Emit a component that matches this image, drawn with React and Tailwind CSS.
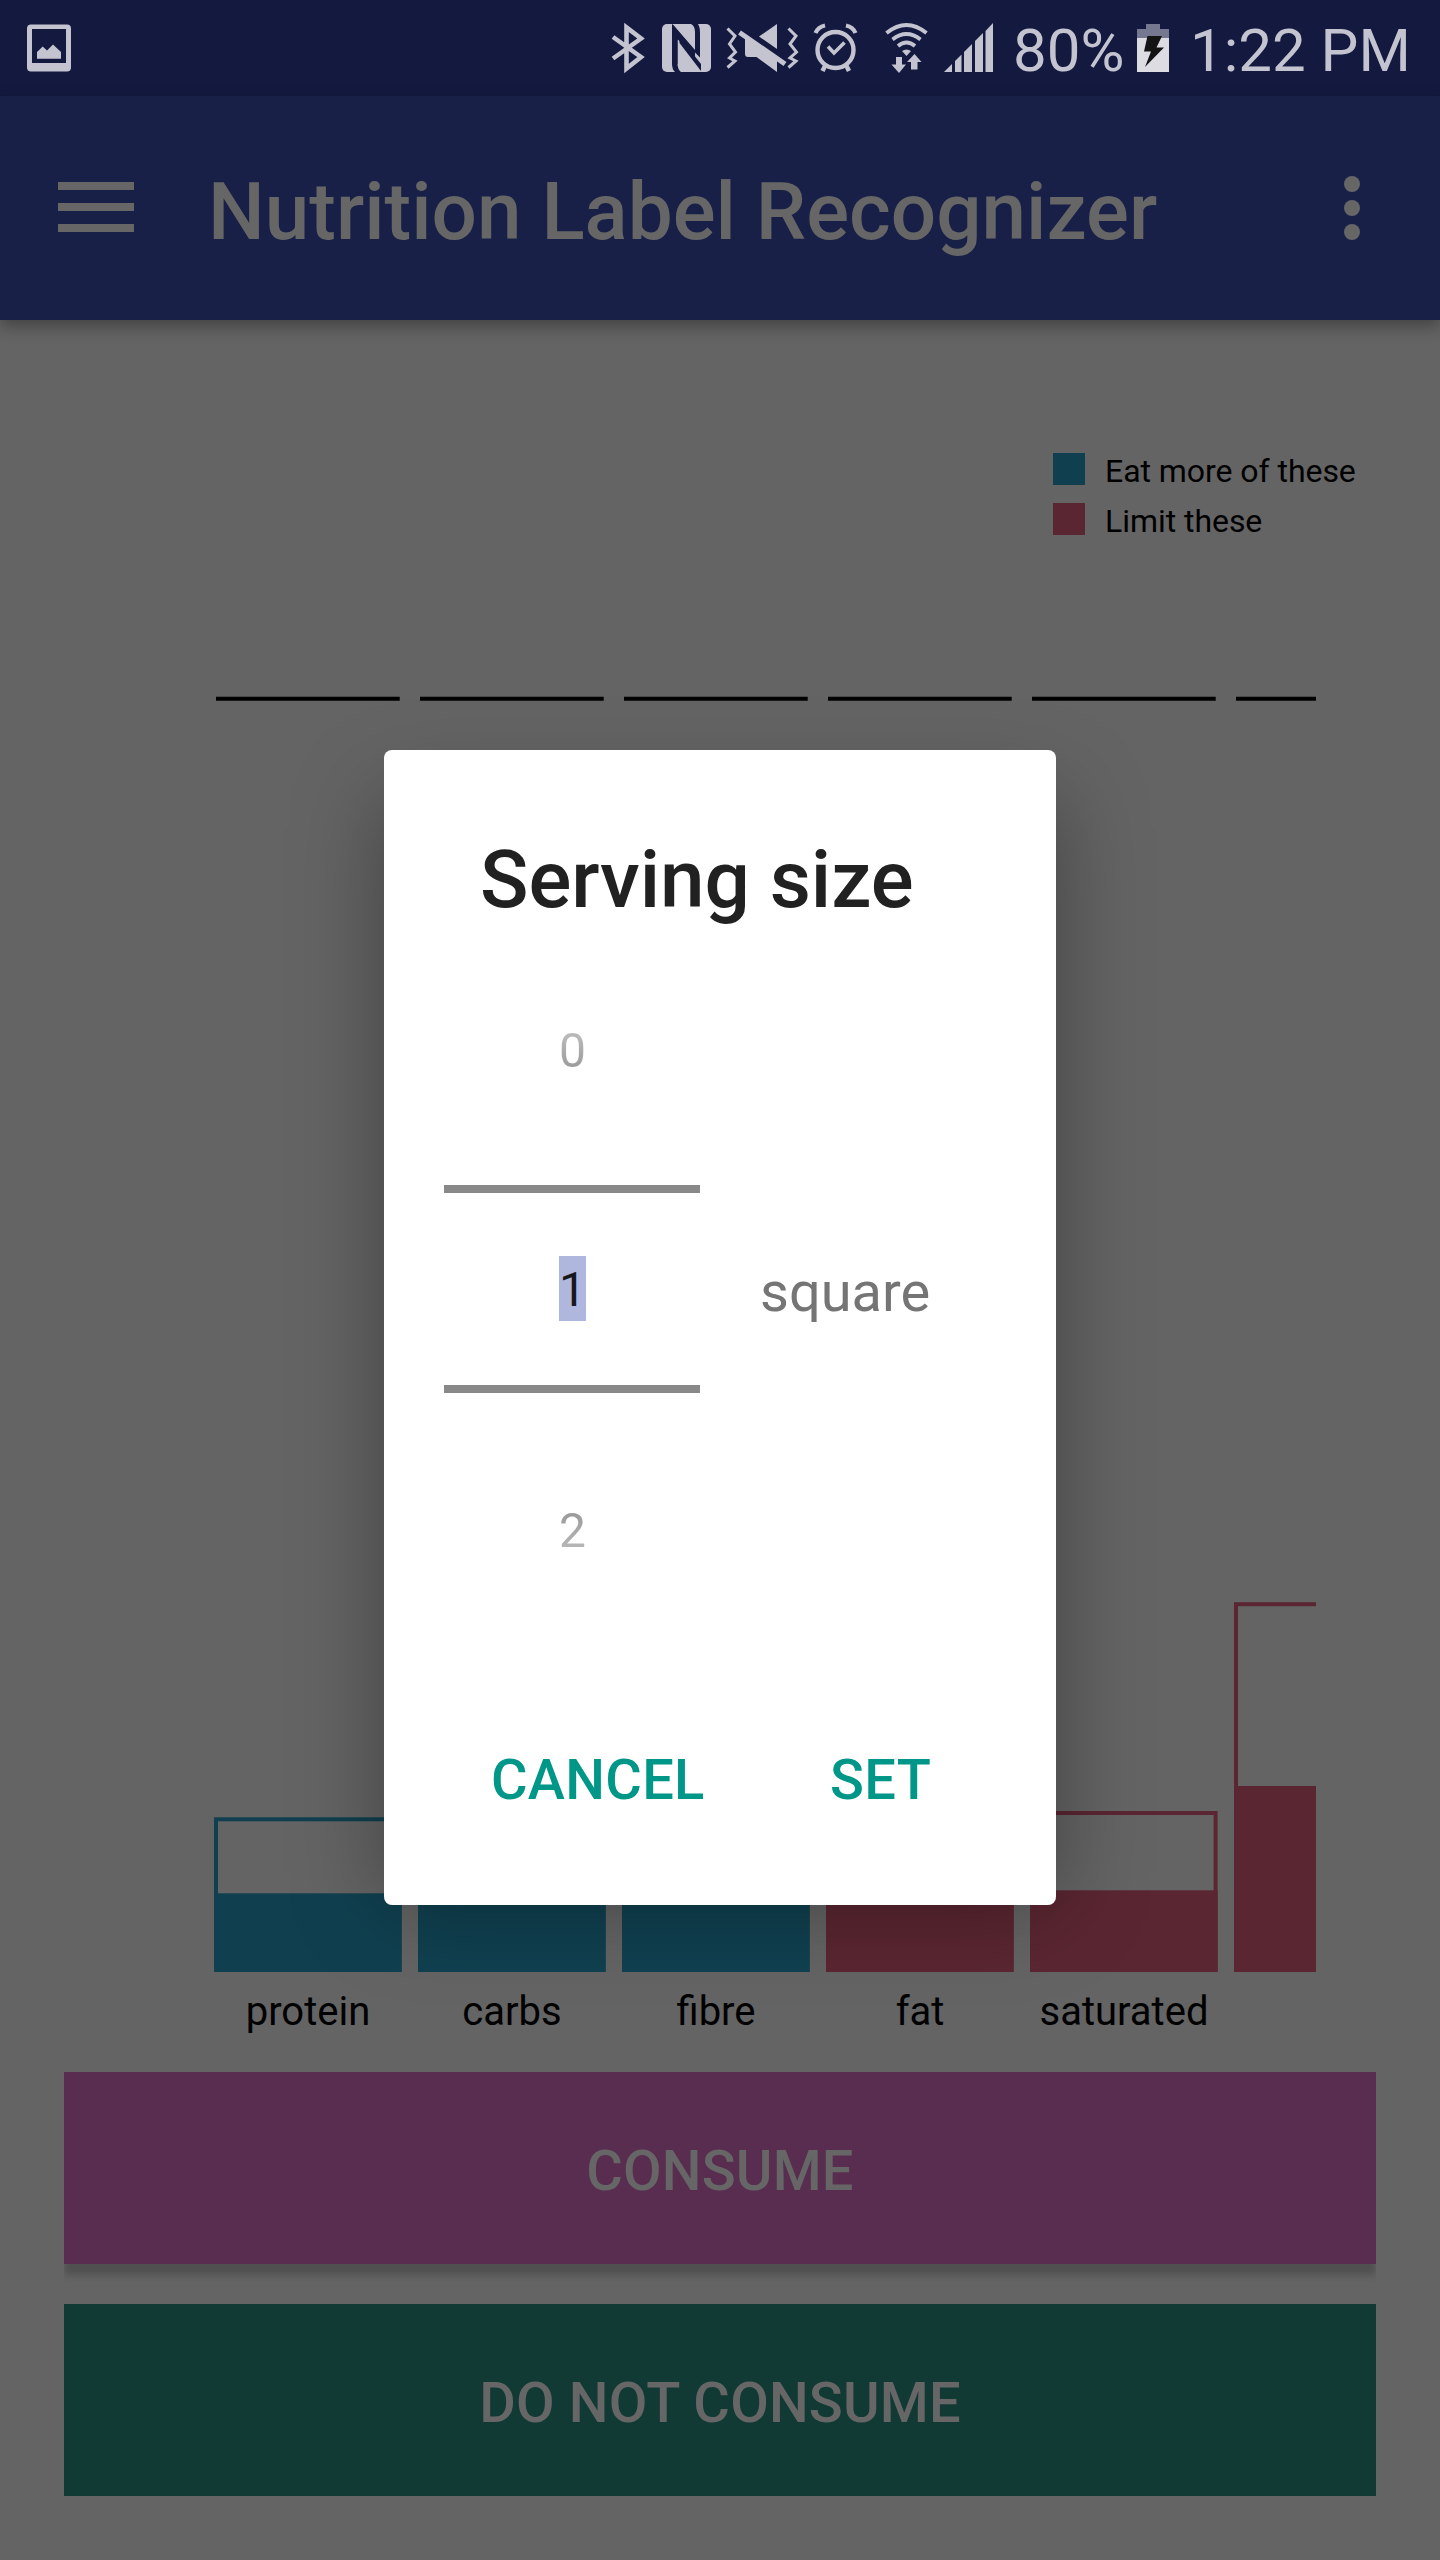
const INK = "#c4c4d0";
const BLUE = "#104050";
const RED = "#5a2631";

function StatusIcons() {
  return (
    <svg className="h-24 w-[400px] shrink-0" viewBox="600 0 400 96" fill={INK}>
      {/* bluetooth */}
      <path
        d="M613 37 L641 57 L626.5 68.5 V27.5 L641 38.5 L613 58.5"
        fill="none"
        stroke={INK}
        strokeWidth="4.6"
      />
      {/* nfc */}
      <rect x="662" y="24" width="49" height="48" rx="5" />
      <g fill="#141940">
        <path d="M672 24 L695 51 V32 Q695 26 691 24 H698 Q700 27 700 33 V57.5 L680 37.5 L677.5 40 V64 Q677.5 69 681 72 H675 Q672 69 672 64 Z" />
        <path d="M677.5 39 L695 58 V50 L672.5 24 V64 H677.5 Z" />
        <path d="M679.5 43 L701 71 V64 L679.5 37 Z" />
      </g>
      {/* muted and vibrating */}
      <g fill="none" stroke={INK} strokeWidth="3">
        <path d="M727.5 28.5 L735 36 L729.5 44 L735.5 52 L729.5 58 L735 61 L727.5 67.5" />
        <path d="M788.5 28.5 L796 36 L790 44 L796.5 52 L790 58 L796 61 L788.5 67.5" />
      </g>
      <path d="M777 24 V49 L759 36.5 Z" />
      <path d="M745 38 L777 60 V72 L756.5 57 H748 Q745 57 745 54 Z" />
      <path d="M739.5 32.5 L785 64" stroke={INK} strokeWidth="5" />
      {/* alarm */}
      <g fill="none" stroke={INK}>
        <circle cx="835.5" cy="50" r="18" strokeWidth="4.4" />
        <path d="M828 46.5 L834 53 L844.5 42.5" strokeWidth="3.6" />
        <path d="M815.5 33 Q818 27 825 25.5 M855.500 33 Q853 27 846 25.5" strokeWidth="4.2" />
        <path d="M825.500 65 L822.500 71 M846 65 L849 71" strokeWidth="4.5" />
      </g>
      {/* wifi with traffic arrows */}
      <g fill="none" stroke={INK} strokeWidth="3.8">
        <path d="M886.500 33 Q906.500 17 926.500 33" />
        <path d="M892.500 39.500 Q906.500 28.500 920.500 39.500" />
        <path d="M898 46 Q906.500 39 915 46" />
      </g>
      <path d="M902 51 Q906.500 48 911 51 L906.500 56 Z" />
      <path d="M896 57 H902 V64.500 H906 L899 73 L891.500 64.500 H896 Z" />
      <path d="M911 69.500 H917.500 V62 H921.500 L914.500 54 L907 62 H911 Z" />
      {/* signal strength */}
      <path d="M944 72 L952 64 V72 Z M955 61 L961.500 54.500 V72 H955 Z M964 52 L972 44 V72 H964 Z M975 41 L983 33 V72 H975 Z M985.500 31 L993 23 V72 H985.500 Z" />
    </svg>
  );
}

function StatusBar() {
  return (
    <div className="flex h-24 items-center bg-[#141940] pl-6 text-[60px] leading-[60px] text-[#c4c4d0]">
      <svg className="h-24 w-[50px]" viewBox="24 0 50 96">
        <path
          fillRule="evenodd"
          fill={INK}
          d="M31 24.500 H67 Q71 24.500 71 28.500 V67.500 Q71 71.500 67 71.500 H31 Q27 71.500 27 67.500 V28.500 Q27 24.500 31 24.500 Z M32 29 V63 H66 V29 Z"
        />
        <path fill={INK} d="M37 58.700 V52 L42.700 46.500 L47 50.500 L53 44.500 L61 52 V58.700 Z" />
      </svg>
      <div className="w-[526px]" />
      <StatusIcons />
      <span className="w-[137px] pt-1.5 pl-[13px]">80%</span>
      <svg className="h-24 w-8 shrink-0" viewBox="1137 0 32 96">
        <path fill="#75788e" d="M1146 24 H1160 V29 H1169 V38 H1137 V29 H1146 Z" />
        <path fill="#dcdce2" d="M1137 38 H1169 V72 H1137 Z" />
        <path fill="#141414" d="M1147.500 36 H1162 L1156.500 47.500 H1164 L1145 67 L1151 51.500 H1144 Z" />
      </svg>
      <span className="pt-1.5 pl-[21px] whitespace-nowrap">1:22 PM</span>
    </div>
  );
}

function AppBar() {
  return (
    <div className="relative flex h-56 items-center bg-[#192047] pl-[58px] shadow-[0_6px_16px_rgba(0,0,0,0.35)]">
      <div className="flex w-[76px] flex-col gap-[13px] pb-0.5">
        <div className="h-2 bg-[#666]" />
        <div className="h-2 bg-[#666]" />
        <div className="h-2 bg-[#666]" />
      </div>
      <h1 className="w-[1210px] pt-[7px] pl-[74px] text-[80px] leading-[80px] font-medium whitespace-nowrap text-[#666]">
        Nutrition Label Recognizer
      </h1>
      <div className="flex w-4 flex-col gap-2">
        <div className="size-4 rounded-full bg-[#666]" />
        <div className="size-4 rounded-full bg-[#666]" />
        <div className="size-4 rounded-full bg-[#666]" />
      </div>
    </div>
  );
}

function Legend() {
  return (
    <div className="flex flex-col gap-[18px] pt-[133px] pl-[1053px] text-[32px] leading-8 tracking-[-0.05px] text-black">
      <div className="flex h-8 items-center gap-5">
        <div className="size-8 bg-[#104050]" />
        <span className="pt-[3px] whitespace-nowrap">Eat more of these</span>
      </div>
      <div className="flex h-8 items-center gap-5">
        <div className="size-8 bg-[#5a2631]" />
        <span className="pt-[3px] whitespace-nowrap">Limit these</span>
      </div>
    </div>
  );
}

const BARS = [
  { color: BLUE, top: 1819.3, fill: 1895.3 },
  { color: BLUE, top: 1819.3, fill: 1895.3 },
  { color: BLUE, top: 1819.3, fill: 1895.3 },
  { color: RED, top: 1813, fill: 1892.3 },
  { color: RED, top: 1813, fill: 1892.3 },
  { color: RED, top: 1604.2, fill: 1788 },
];
const LABELS = ["protein", "carbs", "fibre", "fat", "saturated"];

function Chart() {
  return (
    <div className="pt-[145px] pl-[200px]">
      <svg className="h-[1292px] w-[1116px]" viewBox="200 680 1116 1292">
        {BARS.map((bar, i) => {
          const x = 216 + i * 204;
          return (
            <g key={i}>
              <path d={`M${x} 698.700 h183.700`} stroke="#000" strokeWidth="4" />
              <rect x={x} y={bar.top} width="183.600" height="200" fill="none" stroke={bar.color} strokeWidth="4" />
              <rect x={x - 2} y={bar.fill - 2} width="187.600" height="200" fill={bar.color} />
            </g>
          );
        })}
      </svg>
      <div className="flex h-[100px] pt-[15px] pl-1.5 text-[40px] leading-[50px] text-black">
        {LABELS.map((label) => (
          <span key={label} className="w-[204px] text-center">
            {label}
          </span>
        ))}
      </div>
    </div>
  );
}

function Actions() {
  return (
    <div className="flex flex-col gap-10 px-16 text-[56px] leading-[56px] font-medium text-[#666]">
      <div className="[clip-path:inset(0_0_-24px_0)]">
        <button className="flex h-48 w-full items-center justify-center bg-[#592d50] pt-1.5 font-medium tracking-[0.2px] shadow-[0_11px_7px_rgba(0,0,0,0.2)]">
          CONSUME
        </button>
      </div>
      <button className="flex h-48 items-center justify-center bg-[#123a35] pt-1.5 font-medium tracking-[0.2px]">
        DO NOT CONSUME
      </button>
    </div>
  );
}

function ServingDialog() {
  return (
    <div className="absolute top-[750px] left-[384px] h-[1155px] w-[672px]">
      <div className="absolute inset-x-0 top-[47px] bottom-0 rounded-lg shadow-[0_0_90px_rgba(0,0,0,0.34)]" />
      <div className="relative flex h-full flex-col rounded-lg bg-white">
        <h2 className="h-[195px] pt-[90px] pl-24 text-[80px] leading-[80px] font-medium tracking-[-0.05px] text-[#212121]">
          Serving size
        </h2>
        <div className="flex h-[688px] items-start gap-[60px] pl-[60px]">
          <div className="flex w-64 flex-col items-center text-5xl leading-[65px]">
            <div className="h-60 pt-[73px] pl-px">
              <span className="block bg-linear-to-b from-[#b8b8b8] from-30% to-[#999] to-80% bg-clip-text text-transparent">0</span>
            </div>
            <div className="flex h-[208px] w-full items-start justify-center border-y-8 border-[#888] pt-[63px] pl-px">
              <span className="h-[65px] bg-[#b0b7df] pt-0.5 leading-[64px] text-[#17181c]">1</span>
            </div>
            <div className="pt-[105px] pl-px">
              <span className="block bg-linear-to-b from-[#999] from-20% to-[#b8b8b8] to-80% bg-clip-text text-transparent">2</span>
            </div>
          </div>
          <span className="pt-[314px] text-[56px] leading-[66px] text-[#757575]">square</span>
        </div>
        <div className="flex pt-[119px] pl-[107px] text-[56px] leading-[56px] font-medium tracking-[0.3px] text-[#009688]">
          <span className="w-[339px]">CANCEL</span>
          <span>SET</span>
        </div>
      </div>
    </div>
  );
}

export default function App() {
  return (
    <div className="relative h-[2560px] w-[1440px] overflow-hidden bg-[#646464] font-[Roboto,sans-serif]">
      <StatusBar />
      <AppBar />
      <Legend />
      <Chart />
      <Actions />
      <ServingDialog />
    </div>
  );
}
